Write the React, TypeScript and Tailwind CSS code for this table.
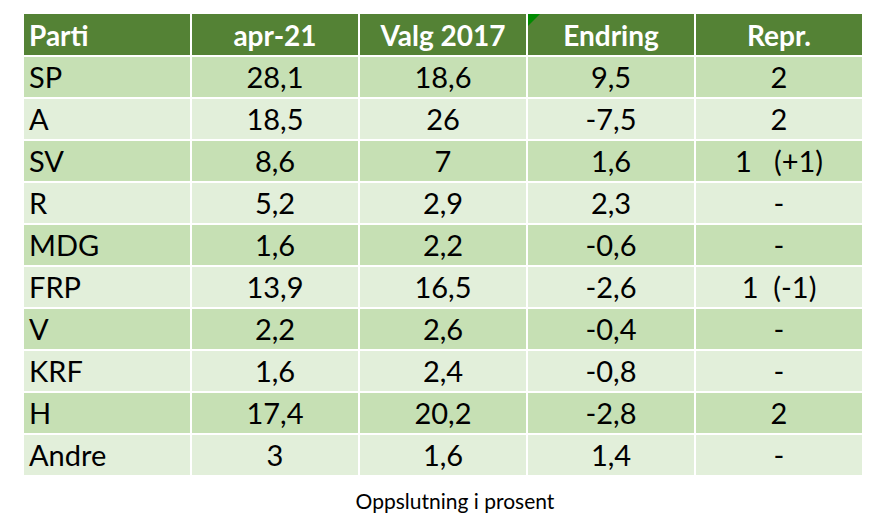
import React from 'react'

const rows: [string, string, string, string, string][] = [
  ['SP', '28,1', '18,6', '9,5', '2'],
  ['A', '18,5', '26', '-7,5', '2'],
  ['SV', '8,6', '7', '1,6', '1   (+1)'],
  ['R', '5,2', '2,9', '2,3', '-'],
  ['MDG', '1,6', '2,2', '-0,6', '-'],
  ['FRP', '13,9', '16,5', '-2,6', '1  (-1)'],
  ['V', '2,2', '2,6', '-0,4', '-'],
  ['KRF', '1,6', '2,4', '-0,8', '-'],
  ['H', '17,4', '20,2', '-2,8', '2'],
  ['Andre', '3', '1,6', '1,4', '-'],
]

export default function App() {
  return (
    <div className="w-[886px] h-[519px] bg-white pt-[14px] pl-[24px] font-['Lato',sans-serif]">
      <div className="grid grid-cols-[168px_168px_168px_168px_166px] w-[838px]">
        <div className="h-[43px] bg-[#548235] border-r-2 border-b-2 border-white flex items-center pl-[5px] text-white font-bold text-[28px]">
          Parti
        </div>
        <div className="h-[43px] bg-[#548235] border-r-2 border-b-2 border-white flex items-center justify-center text-white font-bold text-[28px]">
          apr-21
        </div>
        <div className="h-[43px] bg-[#548235] border-r-2 border-b-2 border-white flex items-center justify-center text-white font-bold text-[28px]">
          Valg 2017
        </div>
        <div className="relative h-[43px] bg-[#548235] border-r-2 border-b-2 border-white flex items-center justify-center text-white font-bold text-[28px]">
          <span className="absolute left-0 top-0 w-0 h-0 border-t-[12px] border-r-[12px] border-t-[#008a00] border-r-transparent" />
          Endring
        </div>
        <div className="h-[43px] bg-[#548235] border-b-2 border-white flex items-center justify-center text-white font-bold text-[28px]">
          Repr.
        </div>
        {rows.map((r, i) => {
          const bg = i % 2 === 0 ? 'bg-[#c6e0b4]' : 'bg-[#e2efda]'
          return (
            <React.Fragment key={r[0]}>
              <div className={`${bg} h-[42px] border-r-2 border-b-2 border-white flex items-center pl-[5px] text-black text-[29px]`}>
                {r[0]}
              </div>
              <div className={`${bg} h-[42px] border-r-2 border-b-2 border-white flex items-center justify-center text-black text-[29px]`}>
                {r[1]}
              </div>
              <div className={`${bg} h-[42px] border-r-2 border-b-2 border-white flex items-center justify-center text-black text-[29px]`}>
                {r[2]}
              </div>
              <div className={`${bg} h-[42px] border-r-2 border-b-2 border-white flex items-center justify-center text-black text-[29px]`}>
                {r[3]}
              </div>
              <div className={`${bg} h-[42px] border-b-2 border-white flex items-center justify-center text-black text-[29px] whitespace-pre`}>
                {r[4]}
              </div>
            </React.Fragment>
          )
        })}
      </div>
      <div className="w-[838px] pl-[24px] text-center mt-[8px] text-[21px] text-black">
        Oppslutning i prosent
      </div>
    </div>
  )
}
